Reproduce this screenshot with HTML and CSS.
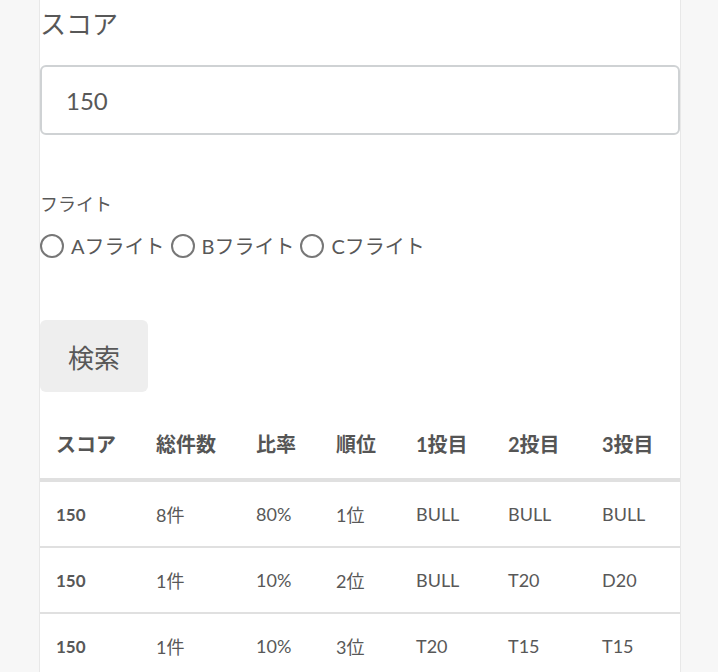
FILE: index.html
```html
<!DOCTYPE html>
<html lang="ja">
<head>
<meta charset="utf-8">
<title>スコア検索</title>
<link rel="stylesheet" href="styles.css">
</head>
<body>
<main class="page">
  <form class="search">
    <label class="field-label" for="score">スコア</label>
    <input class="score-input" id="score" type="text" value="150">
    <div class="flight">
      <div class="flight-label">フライト</div>
      <div class="radios">
        <label class="radio"><input type="radio" name="flight"><span>Aフライト</span></label>
        <label class="radio"><input type="radio" name="flight"><span>Bフライト</span></label>
        <label class="radio"><input type="radio" name="flight"><span>Cフライト</span></label>
      </div>
    </div>
    <button type="button" class="btn">検索</button>
  </form>
  <table class="results">
    <colgroup>
      <col class="c1"><col class="c2"><col class="c3"><col class="c4"><col class="c5"><col class="c6"><col class="c7">
    </colgroup>
    <thead>
      <tr><th>スコア</th><th>総件数</th><th>比率</th><th>順位</th><th>1投目</th><th>2投目</th><th>3投目</th></tr>
    </thead>
    <tbody>
      <tr><td class="sc">150</td><td>8件</td><td>80%</td><td>1位</td><td>BULL</td><td>BULL</td><td>BULL</td></tr>
      <tr><td class="sc">150</td><td>1件</td><td>10%</td><td>2位</td><td>BULL</td><td>T20</td><td>D20</td></tr>
      <tr><td class="sc">150</td><td>1件</td><td>10%</td><td>3位</td><td>T20</td><td>T15</td><td>T15</td></tr>
    </tbody>
  </table>
</main>
</body>
</html>
```
FILE: styles.css
```css
html, body {
  margin: 0;
  padding: 0;
}
body {
  background: #f7f7f7;
  font-family: Lato, "Noto Sans CJK JP", sans-serif;
  color: #585858;
  overflow: hidden;
}
.page {
  width: 640px;
  margin-left: 39px;
  background: #fff;
  border-left: 1px solid #e8e8e8;
  border-right: 1px solid #e8e8e8;
  min-height: 700px;
}
.search {
  display: flex;
  flex-direction: column;
  align-items: flex-start;
  padding-top: 5px;
}
.field-label {
  font-size: 26px;
  line-height: 39px;
}
.score-input {
  box-sizing: border-box;
  width: 640px;
  height: 70px;
  margin-top: 21px;
  padding: 0 24px;
  border: 2px solid #cfd2d4;
  border-radius: 6px;
  font-family: Lato, "Noto Sans CJK JP", sans-serif;
  font-size: 24px;
  color: #585858;
  outline: none;
}
.flight {
  margin-top: 56px;
}
.flight-label {
  font-size: 18px;
  line-height: 26px;
}
.radios {
  display: flex;
  gap: 6px;
  margin-top: 13px;
}
.radio {
  display: flex;
  align-items: center;
  gap: 7px;
  font-size: 20px;
  line-height: 32px;
}
.radio input {
  appearance: none;
  -webkit-appearance: none;
  width: 24px;
  height: 24px;
  margin: 0;
  border: 2px solid #777;
  border-radius: 50%;
  background: #fff;
  box-sizing: border-box;
}
.btn {
  margin-top: 58px;
  height: 72px;
  padding: 0 28px;
  background: #eee;
  border: none;
  border-radius: 6px;
  font-family: Lato, "Noto Sans CJK JP", sans-serif;
  font-size: 26px;
  color: #585858;
}
.results {
  width: 640px;
  margin-top: 16px;
  border-collapse: collapse;
  table-layout: fixed;
}
.c1 { width: 100px; }
.c2 { width: 100px; }
.c3 { width: 80px; }
.c4 { width: 80px; }
.c5 { width: 92px; }
.c6 { width: 94px; }
.c7 { width: 94px; }
.results th {
  text-align: left;
  font-size: 20px;
  font-weight: 700;
  height: 70px;
  padding: 0 0 0 16px;
  border-bottom: 4px solid #e0e0e0;
  color: #555;
}
.results td {
  font-size: 18px;
  height: 64px;
  padding: 0 0 0 16px;
  border-bottom: 2px solid #e0e0e0;
  color: #585858;
}
.results td.sc {
  font-weight: 700;
  font-size: 17px;
}
```
